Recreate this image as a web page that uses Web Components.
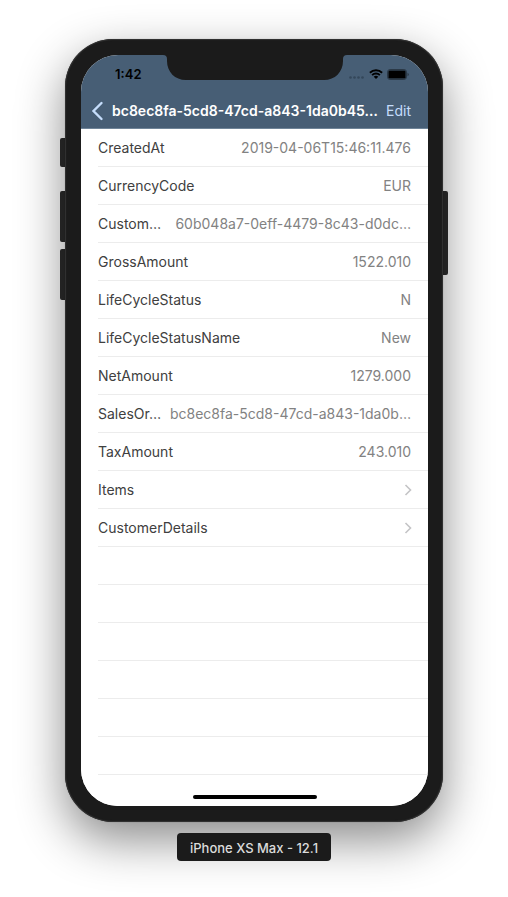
<!DOCTYPE html>
<html lang="en">
<head>
<meta charset="utf-8">
<meta name="viewport" content="width=device-width, initial-scale=1">
<title>iPhone XS Max - 12.1</title>
<style>
  body { margin: 0; background: #fff; font-family: Inter, "Liberation Sans", sans-serif; }
</style>
</head>
<body>
<simulator-window>
  <phone-frame>
    <status-bar>1:42</status-bar>
    <nav-bar>bc8ec8fa-5cd8-47cd-a843-1da0b45…</nav-bar>
    <detail-list>
      <detail-row label="CreatedAt">2019-04-06T15:46:11.476</detail-row>
      <detail-row label="CurrencyCode">EUR</detail-row>
      <detail-row label="Custom…">60b048a7-0eff-4479-8c43-d0dc…</detail-row>
      <detail-row label="GrossAmount">1522.010</detail-row>
      <detail-row label="LifeCycleStatus">N</detail-row>
      <detail-row label="LifeCycleStatusName">New</detail-row>
      <detail-row label="NetAmount">1279.000</detail-row>
      <detail-row label="SalesOr…">bc8ec8fa-5cd8-47cd-a843-1da0b…</detail-row>
      <detail-row label="TaxAmount">243.010</detail-row>
      <link-row href="#items">Items</link-row>
      <link-row href="#customer">CustomerDetails</link-row>
      <blank-row></blank-row>
      <blank-row></blank-row>
      <blank-row></blank-row>
      <blank-row></blank-row>
      <blank-row></blank-row>
      <blank-row></blank-row>
    </detail-list>
    <home-indicator></home-indicator>
  </phone-frame>
  <device-label>iPhone XS Max - 12.1</device-label>
</simulator-window>

<script>
const define = (name, html, setup) => {
  const template = document.createElement('template');
  template.innerHTML = html;
  customElements.define(name, class extends HTMLElement {
    constructor() {
      super();
      this.attachShadow({ mode: 'open' }).append(template.content.cloneNode(true));
    }
    connectedCallback() {
      if (setup) setup(this, this.shadowRoot);
    }
  });
};

define('simulator-window', `
  <style>
    :host { display: flex; flex-direction: column; align-items: center; gap: 11px; padding: 39px 65px 36px; }
    ::slotted(phone-frame) { align-self: stretch; }
  </style>
  <slot></slot>`);

define('phone-frame', `
  <style>
    :host { display: block; position: relative; box-sizing: border-box; padding: 16px 15px 16px 16px;
      border-radius: 48px; background: #1b1b1b;
      box-shadow: inset 0 0 1px 1px #333, 0 0 1px rgba(0,0,0,.4), 0 18px 48px rgba(0,0,0,.46); }
    .screen { overflow: hidden; border-radius: 37px; background: #fff; }
    .key { position: absolute; z-index: -1; width: 8px; background: #2c2c2c; border-radius: 2px; }
    .left { left: -5px; }
    .right { right: -5px; }
    .mute { top: 99px; height: 29px; }
    .up { top: 152px; height: 51px; }
    .down { top: 210px; height: 51px; }
    .power { top: 152px; height: 84px; }
  </style>
  <span class="key left mute"></span>
  <span class="key left up"></span>
  <span class="key left down"></span>
  <span class="key right power"></span>
  <div class="screen"><slot></slot></div>`);

define('status-bar', `
  <style>
    :host { display: grid; grid-template-columns: 1fr 184px 1fr; height: 38px; background: #475e75; color: #000; }
    .time { justify-self: end; align-self: center; padding-right: 21px; font-size: 13px; line-height: 16px; font-weight: 600; }
    .icons { display: flex; align-items: center; gap: 4px; padding-left: 1px; }
    svg { display: block; flex: none; }
  </style>
  <span class="time"><slot></slot></span>
  <svg width="184" height="25" viewBox="0 0 184 25" aria-hidden="true">
    <path d="M0 0Q4 0 4 4V6C4 17 12 25 23 25H161C172 25 180 17 180 6V4Q180 0 184 0Z" fill="#1b1b1b"/>
  </svg>
  <div class="icons">
    <svg width="17" height="12" viewBox="0 0 17 12" fill="#34475a" aria-hidden="true">
      <circle cx="2.5" cy="9.5" r="1.3"/><circle cx="6.5" cy="9.5" r="1.3"/><circle cx="10.5" cy="9.5" r="1.3"/><circle cx="14.5" cy="9.5" r="1.3"/>
    </svg>
    <svg width="14" height="10" viewBox="0 0 14 10" aria-hidden="true">
      <path d="M.9 3.7a8.7 8.7 0 0 1 12.2 0M3.1 6.1a5.5 5.5 0 0 1 7.8 0" fill="none" stroke="#000" stroke-width="1.9"/>
      <path d="M7 10 4.7 7.8a3.1 3.1 0 0 1 4.6 0Z"/>
    </svg>
    <svg width="22" height="11" viewBox="0 0 22 11" aria-hidden="true">
      <rect x=".5" y=".5" width="19" height="10" rx="2.6" fill="none" stroke="#2b3947"/>
      <rect x="1.4" y="1.4" width="17.2" height="8.2" rx="1.4"/>
      <path d="M20.5 3.7q1.3.5 1.3 1.8t-1.3 1.8Z" fill="#2b3947"/>
    </svg>
  </div>`);

define('nav-bar', `
  <style>
    :host { display: flex; align-items: center; height: 35px; padding: 0 17px 0 10px; border-bottom: 1px solid #6f8498; background: #475e75; }
    button { flex: none; margin: 0; padding: 0; border: 0; background: none; color: #c5ddfb; font: 400 14px/20px Inter, "Liberation Sans", sans-serif; }
    h1 { flex: 1; min-width: 0; margin: 0 8px; color: #fff; font-size: 14px; line-height: 20px; font-weight: 600; white-space: nowrap; }
    svg { display: block; }
  </style>
  <button aria-label="Back"><svg width="13" height="20" viewBox="0 0 13 20"><path d="m10.5 2-8 8 8 8" fill="none" stroke="#c5ddfb" stroke-width="2.4" stroke-linecap="round"/></svg></button>
  <h1><slot></slot></h1>
  <button>Edit</button>`);

define('detail-list', `
  <style>:host { display: block; padding-left: 17px; background: #fff; }</style>
  <slot></slot>`);

define('detail-row', `
  <style>
    :host { display: flex; justify-content: space-between; align-items: center; box-sizing: border-box; height: 38px; padding-right: 17px;
      border-bottom: 1px solid #ececec; font-size: 14px; line-height: 20px; white-space: nowrap; }
    .label { color: #404040; }
    .value { color: #828282; }
  </style>
  <span class="label"></span><span class="value"><slot></slot></span>`,
  (host, root) => { root.querySelector('.label').textContent = host.getAttribute('label'); });

define('link-row', `
  <style>
    :host { display: block; }
    a { display: flex; justify-content: space-between; align-items: center; box-sizing: border-box; height: 38px; padding-right: 16px;
      border-bottom: 1px solid #ececec; color: #404040; font-size: 14px; line-height: 20px; text-decoration: none; }
  </style>
  <a><span><slot></slot></span><svg width="8" height="12" viewBox="0 0 8 12" aria-hidden="true"><path d="m1.5 1 5 5-5 5" fill="none" stroke="#c4c4c6" stroke-width="1.6"/></svg></a>`,
  (host, root) => { root.querySelector('a').href = host.getAttribute('href'); });

define('blank-row', `
  <style>:host { display: block; box-sizing: border-box; height: 38px; border-bottom: 1px solid #ececec; }</style>`);

define('home-indicator', `
  <style>
    :host { display: flex; justify-content: center; padding: 20px 0 7px; background: #fff; }
    span { width: 124px; height: 4px; border-radius: 2px; background: #000; }
  </style>
  <span></span>`);

define('device-label', `
  <style>
    :host { display: block; position: relative; padding: 6px 13px 4px; border-radius: 4px; background: #1b1b1b; color: #dcdcdc;
      font-size: 13px; line-height: 18px; font-weight: 500; white-space: nowrap; }
  </style>
  <slot></slot>`);
</script>
</body>
</html>
